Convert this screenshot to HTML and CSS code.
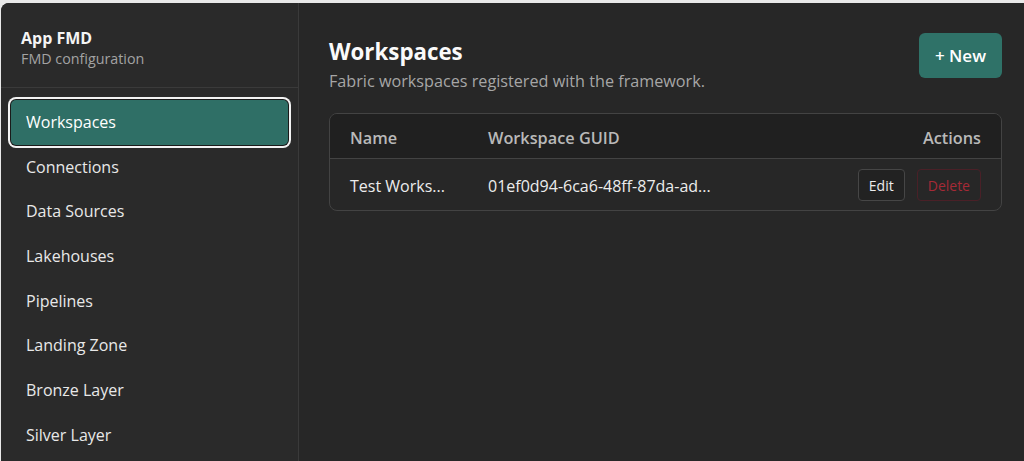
FILE: index.html
```html
<html lang="en">
<head>
    <meta name="viewport" content="width=device-width, initial-scale=1.0">
    <title>App FMD - Workspaces</title>
    <link rel="stylesheet" href="styles.css">
</head>
<body>
    <div class="window">
        <div class="sidebar">
            <div class="brand">
                <div class="brandName">App FMD</div>
                <div class="brandSub">FMD configuration</div>
            </div>
            <div class="nav">
                <a class="navItem active">Workspaces</a>
                <a class="navItem">Connections</a>
                <a class="navItem">Data Sources</a>
                <a class="navItem">Lakehouses</a>
                <a class="navItem">Pipelines</a>
                <a class="navItem">Landing Zone</a>
                <a class="navItem">Bronze Layer</a>
                <a class="navItem">Silver Layer</a>
            </div>
        </div>
        <div class="main">
            <div class="pageHead">
                <div>
                    <h1 class="pageTitle">Workspaces</h1>
                    <p class="pageSub">Fabric workspaces registered with the framework.</p>
                </div>
                <button class="btnNew">+ New</button>
            </div>
            <div class="tableCard">
                <table class="grid">
                    <thead>
                        <tr>
                            <th class="colName">Name</th>
                            <th class="colGuid">Workspace GUID</th>
                            <th class="colActions">Actions</th>
                        </tr>
                    </thead>
                    <tbody>
                        <tr>
                            <td>Test Works...</td>
                            <td>01ef0d94-6ca6-48ff-87da-ad...</td>
                            <td class="colActions">
                                <div class="actions">
                                    <button class="btnSmall">Edit</button>
                                    <button class="btnSmall danger">Delete</button>
                                </div>
                            </td>
                        </tr>
                    </tbody>
                </table>
            </div>
        </div>
    </div>
</body>
</html>
```

FILE: styles.css
```css
body {
    font-family: "Open Sans", "Noto Sans", sans-serif;
    background-color: #e9e9e9;
    margin: 0;
    padding: 3px 0 0 1px;
    height: 100vh;
    box-sizing: border-box;
    overflow: hidden;
}
.window {
    display: flex;
    height: 100%;
    background-color: #272727;
    border-top-left-radius: 8px;
    overflow: hidden;
    color: #e6e6e6;
}
.sidebar {
    width: 297px;
    flex-shrink: 0;
    background-color: #2a2a2a;
    border-right: 1px solid #3a3a3a;
}
.brand {
    height: 85px;
    box-sizing: border-box;
    padding: 24px 20px 0 20px;
    border-bottom: 1px solid #3a3a3a;
}
.brandName {
    font-size: 16px;
    font-weight: 700;
    color: #f4f4f4;
    line-height: 22px;
}
.brandSub {
    font-size: 14.3px;
    color: #a3a3a3;
    line-height: 20px;
}
.nav {
    padding: 12px 10px 10px 10px;
}
.navItem {
    display: block;
    height: 44.7px;
    line-height: 44.7px;
    padding: 0 15px;
    font-size: 16px;
    color: #e8e8e8;
    border-radius: 5px;
}
.navItem.active {
    background-color: #2f6f66;
    color: #fff;
    box-shadow: 0 0 0 1px #1a1a1a, 0 0 0 3px #f2f2f2;
}
.main {
    flex: 1;
    padding: 30px 22px 30px 30px;
}
.pageHead {
    display: flex;
    justify-content: space-between;
    align-items: flex-start;
}
.pageTitle {
    margin: 4px 0 0 0;
    font-size: 22.3px;
    font-weight: 700;
    line-height: 29px;
    color: #fafafa;
}
.pageSub {
    margin: 5px 0 0 0;
    font-size: 16.2px;
    line-height: 20px;
    color: #a6a6a6;
}
.btnNew {
    font-family: inherit;
    height: 45px;
    padding: 0 16px;
    background-color: #2f7268;
    color: #fff;
    font-size: 17px;
    font-weight: 600;
    border: none;
    border-radius: 6px;
}
.tableCard {
    margin-top: 22px;
    border: 1px solid #434343;
    border-radius: 8px;
    overflow: hidden;
}
.grid {
    width: 100%;
    border-collapse: collapse;
    table-layout: fixed;
}
.grid th {
    height: 44px;
    box-sizing: border-box;
    padding: 4px 20px 0 20px;
    text-align: left;
    font-size: 16.3px;
    font-weight: 600;
    color: #b9b9b9;
    background-color: #202020;
    border-bottom: 1px solid #434343;
    white-space: nowrap;
}
.grid td {
    height: 52px;
    box-sizing: border-box;
    padding: 4px 20px 0 20px;
    font-size: 16px;
    color: #ececec;
    white-space: nowrap;
}
.grid .colName {
    width: 138px;
}
.grid .colActions {
    width: 200px;
    text-align: right;
}
.actions {
    display: flex;
    justify-content: flex-end;
    gap: 12px;
    margin-top: -2px;
}
.btnSmall {
    font-family: inherit;
    height: 32px;
    padding: 0 10px;
    font-size: 14px;
    color: #ececec;
    background-color: #222;
    border: 1px solid #464646;
    border-radius: 4px;
}
.btnSmall.danger {
    padding: 0 10px;
    color: #a52a36;
    background-color: transparent;
    border-color: #4a2027;
}
```
